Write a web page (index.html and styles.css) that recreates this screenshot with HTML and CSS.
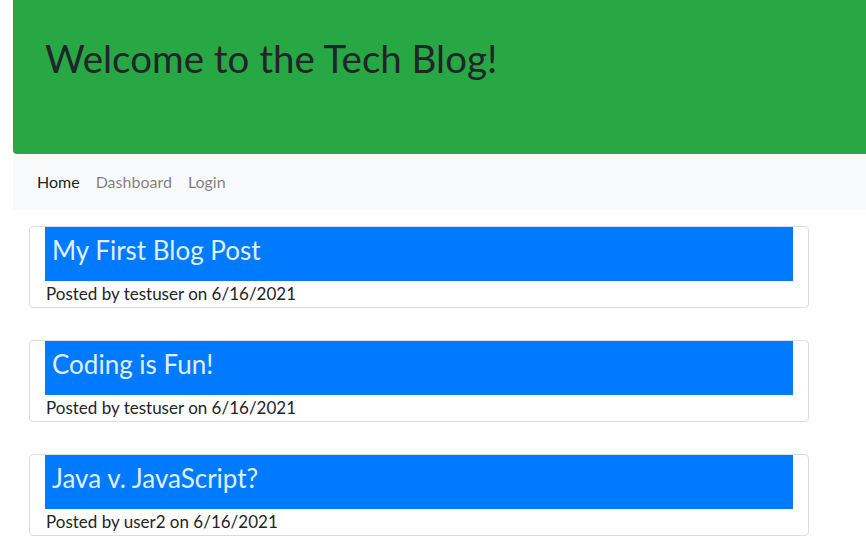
FILE: index.html
```html
<!DOCTYPE html>
<html>
<head>
<meta charset="utf-8">
<link rel="stylesheet" href="styles.css">
</head>
<body>
<div class="page">
  <header class="jumbotron">
    <h1 class="jumbo-title">Welcome to the Tech Blog!</h1>
  </header>
  <nav class="navbar">
    <a class="nav-link active" href="#">Home</a>
    <a class="nav-link" href="#">Dashboard</a>
    <a class="nav-link" href="#">Login</a>
  </nav>
  <main class="posts">
    <article class="card">
      <h2 class="card-title">My First Blog Post</h2>
      <p class="card-meta">Posted by testuser on 6/16/2021</p>
    </article>
    <article class="card">
      <h2 class="card-title">Coding is Fun!</h2>
      <p class="card-meta">Posted by testuser on 6/16/2021</p>
    </article>
    <article class="card">
      <h2 class="card-title">Java v. JavaScript?</h2>
      <p class="card-meta">Posted by user2 on 6/16/2021</p>
    </article>
  </main>
</div>
</body>
</html>
```
FILE: styles.css
```css
html, body {
  margin: 0;
  padding: 0;
  background: #fff;
}
body {
  font-family: Lato, "Open Sans", sans-serif;
  color: #212529;
}
.page {
  padding-left: 13px;
}
.jumbotron {
  background: #28a745;
  height: 154px;
  border-bottom-left-radius: 4px;
  padding-left: 32px;
  box-sizing: border-box;
  padding-top: 32px;
}
.jumbo-title {
  margin: 0;
  font-size: 38.5px;
  font-weight: 400;
  line-height: 52px;
  color: #212529;
}
.navbar {
  background: #f8f9fa;
  height: 56px;
  display: flex;
  align-items: center;
  padding-left: 16px;
  padding-bottom: 2px;
  box-sizing: border-box;
}
.nav-link {
  text-decoration: none;
  color: rgba(0,0,0,0.5);
  font-size: 16px;
  padding: 0 8px;
}
.nav-link.active {
  color: rgba(0,0,0,0.9);
}
.posts {
  padding: 16px 57px 0 16px;
}
.card {
  border: 1px solid #dcdcdc;
  border-radius: 4px;
  padding: 0 15px 0 15px;
  margin-bottom: 32px;
}
.card-title {
  margin: 0;
  background: #007bff;
  height: 54px;
  line-height: 46px;
  padding-left: 7px;
  font-size: 26px;
  font-weight: 400;
  color: #e0eef5;
}
.card-meta {
  margin: 0;
  font-size: 17px;
  line-height: 26px;
  padding-left: 1px;
}
```
